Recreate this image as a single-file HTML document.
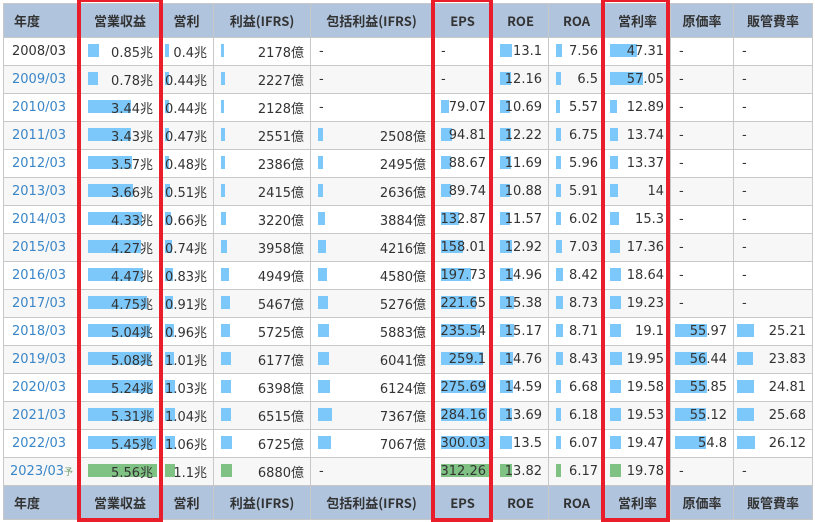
<!DOCTYPE html>
<html><head><meta charset="utf-8"><style>
body{margin:0;background:#fff;width:815px;height:522px;overflow:hidden;position:relative;font-family:"DejaVu Sans","Noto Sans CJK JP",sans-serif;}
table{position:absolute;left:3px;top:3px;border-collapse:collapse;table-layout:fixed;width:809px;font-size:13px;color:#333;}
td,th{border:1px solid #c8c8c8;padding:0 6px 0 0;text-align:right;position:relative;height:27px;white-space:nowrap;overflow:hidden;}
th{background:#b0c4de;height:33px;text-align:center;font-weight:bold;color:#333;font-size:13px;padding:0;font-family:"Noto Sans CJK JP","DejaVu Sans",sans-serif;}
th.y{text-align:left;padding-left:10px;}
td.y{text-align:left;padding-left:8px;color:#3a86c8;}
td.l{text-align:left;padding-left:8px;}
tr:nth-child(odd) td{background:#f7f7f7;}
tr:nth-child(even) td{background:#fff;}
td span{position:relative;z-index:1}
i{position:absolute;top:6px;height:13px;background:#7cc8fb;left:7px;z-index:0}
.g i{background:#80c283}
.c1 i{left:7px}.c2 i{left:5px}.c5 i{left:8px}.c7 i{left:5px}.c8 i{left:4px}.c9 i{left:3px}
sup{font-size:9px;color:#6a9a6a;vertical-align:baseline}
.rb{position:absolute;border:4px solid #ea1d2a;top:-2px;height:516px;z-index:5}
</style></head><body>
<table>
<colgroup><col style="width:77px"><col style="width:79px"><col style="width:54px"><col style="width:97px"><col style="width:122px"><col style="width:60px"><col style="width:56px"><col style="width:56px"><col style="width:66px"><col style="width:63px"><col style="width:79px"></colgroup>
<tr><th class="y">年度</th><th>営業収益</th><th>営利</th><th>利益(IFRS)</th><th>包括利益(IFRS)</th><th>EPS</th><th>ROE</th><th>ROA</th><th>営利率</th><th>原価率</th><th>販管費率</th></tr>
<tr><td class="y" style="color:#333">2008/03</td><td class="c1"><i style="width:11px"></i><span>0.85兆</span></td><td class="c2"><i style="width:4px"></i><span>0.4兆</span></td><td><i style="width:3px"></i><span>2178億</span></td><td class="l">-</td><td class="l">-</td><td><i style="width:12px"></i><span>13.1</span></td><td><i style="width:6px"></i><span>7.56</span></td><td class="c7"><i style="width:27px"></i><span>47.31</span></td><td class="l">-</td><td class="l">-</td></tr>
<tr><td class="y">2009/03</td><td class="c1"><i style="width:10px"></i><span>0.78兆</span></td><td class="c2"><i style="width:4px"></i><span>0.44兆</span></td><td><i style="width:4px"></i><span>2227億</span></td><td class="l">-</td><td class="l">-</td><td><i style="width:11px"></i><span>12.16</span></td><td><i style="width:5px"></i><span>6.5</span></td><td class="c7"><i style="width:33px"></i><span>57.05</span></td><td class="l">-</td><td class="l">-</td></tr>
<tr><td class="y">2010/03</td><td class="c1"><i style="width:43px"></i><span>3.44兆</span></td><td class="c2"><i style="width:4px"></i><span>0.44兆</span></td><td><i style="width:3px"></i><span>2128億</span></td><td class="l">-</td><td class="c5"><i style="width:8px"></i><span>79.07</span></td><td><i style="width:10px"></i><span>10.69</span></td><td><i style="width:4px"></i><span>5.57</span></td><td class="c7"><i style="width:7px"></i><span>12.89</span></td><td class="l">-</td><td class="l">-</td></tr>
<tr><td class="y">2011/03</td><td class="c1"><i style="width:43px"></i><span>3.43兆</span></td><td class="c2"><i style="width:4px"></i><span>0.47兆</span></td><td><i style="width:4px"></i><span>2551億</span></td><td><i style="width:5px"></i><span>2508億</span></td><td class="c5"><i style="width:11px"></i><span>94.81</span></td><td><i style="width:11px"></i><span>12.22</span></td><td><i style="width:5px"></i><span>6.75</span></td><td class="c7"><i style="width:8px"></i><span>13.74</span></td><td class="l">-</td><td class="l">-</td></tr>
<tr><td class="y">2012/03</td><td class="c1"><i style="width:44px"></i><span>3.57兆</span></td><td class="c2"><i style="width:4px"></i><span>0.48兆</span></td><td><i style="width:4px"></i><span>2386億</span></td><td><i style="width:5px"></i><span>2495億</span></td><td class="c5"><i style="width:10px"></i><span>88.67</span></td><td><i style="width:11px"></i><span>11.69</span></td><td><i style="width:5px"></i><span>5.96</span></td><td class="c7"><i style="width:8px"></i><span>13.37</span></td><td class="l">-</td><td class="l">-</td></tr>
<tr><td class="y">2013/03</td><td class="c1"><i style="width:45px"></i><span>3.66兆</span></td><td class="c2"><i style="width:5px"></i><span>0.51兆</span></td><td><i style="width:4px"></i><span>2415億</span></td><td><i style="width:5px"></i><span>2636億</span></td><td class="c5"><i style="width:10px"></i><span>89.74</span></td><td><i style="width:10px"></i><span>10.88</span></td><td><i style="width:5px"></i><span>5.91</span></td><td class="c7"><i style="width:8px"></i><span>14</span></td><td class="l">-</td><td class="l">-</td></tr>
<tr><td class="y">2014/03</td><td class="c1"><i style="width:54px"></i><span>4.33兆</span></td><td class="c2"><i style="width:6px"></i><span>0.66兆</span></td><td><i style="width:5px"></i><span>3220億</span></td><td><i style="width:7px"></i><span>3884億</span></td><td class="c5"><i style="width:18px"></i><span>132.87</span></td><td><i style="width:10px"></i><span>11.57</span></td><td><i style="width:5px"></i><span>6.02</span></td><td class="c7"><i style="width:9px"></i><span>15.3</span></td><td class="l">-</td><td class="l">-</td></tr>
<tr><td class="y">2015/03</td><td class="c1"><i style="width:53px"></i><span>4.27兆</span></td><td class="c2"><i style="width:7px"></i><span>0.74兆</span></td><td><i style="width:6px"></i><span>3958億</span></td><td><i style="width:8px"></i><span>4216億</span></td><td class="c5"><i style="width:22px"></i><span>158.01</span></td><td><i style="width:12px"></i><span>12.92</span></td><td><i style="width:6px"></i><span>7.03</span></td><td class="c7"><i style="width:10px"></i><span>17.36</span></td><td class="l">-</td><td class="l">-</td></tr>
<tr><td class="y">2016/03</td><td class="c1"><i style="width:55px"></i><span>4.47兆</span></td><td class="c2"><i style="width:8px"></i><span>0.83兆</span></td><td><i style="width:8px"></i><span>4949億</span></td><td><i style="width:9px"></i><span>4580億</span></td><td class="c5"><i style="width:30px"></i><span>197.73</span></td><td><i style="width:13px"></i><span>14.96</span></td><td><i style="width:7px"></i><span>8.42</span></td><td class="c7"><i style="width:11px"></i><span>18.64</span></td><td class="l">-</td><td class="l">-</td></tr>
<tr><td class="y">2017/03</td><td class="c1"><i style="width:59px"></i><span>4.75兆</span></td><td class="c2"><i style="width:8px"></i><span>0.91兆</span></td><td><i style="width:9px"></i><span>5467億</span></td><td><i style="width:10px"></i><span>5276億</span></td><td class="c5"><i style="width:35px"></i><span>221.65</span></td><td><i style="width:14px"></i><span>15.38</span></td><td><i style="width:7px"></i><span>8.73</span></td><td class="c7"><i style="width:11px"></i><span>19.23</span></td><td class="l">-</td><td class="l">-</td></tr>
<tr><td class="y">2018/03</td><td class="c1"><i style="width:62px"></i><span>5.04兆</span></td><td class="c2"><i style="width:9px"></i><span>0.96兆</span></td><td><i style="width:9px"></i><span>5725億</span></td><td><i style="width:11px"></i><span>5883億</span></td><td class="c5"><i style="width:39px"></i><span>235.54</span></td><td><i style="width:14px"></i><span>15.17</span></td><td><i style="width:7px"></i><span>8.71</span></td><td class="c7"><i style="width:11px"></i><span>19.1</span></td><td class="c8"><i style="width:32px"></i><span>55.97</span></td><td class="c9"><i style="width:17px"></i><span>25.21</span></td></tr>
<tr><td class="y">2019/03</td><td class="c1"><i style="width:63px"></i><span>5.08兆</span></td><td class="c2"><i style="width:9px"></i><span>1.01兆</span></td><td><i style="width:10px"></i><span>6177億</span></td><td><i style="width:11px"></i><span>6041億</span></td><td class="c5"><i style="width:42px"></i><span>259.1</span></td><td><i style="width:13px"></i><span>14.76</span></td><td><i style="width:7px"></i><span>8.43</span></td><td class="c7"><i style="width:12px"></i><span>19.95</span></td><td class="c8"><i style="width:32px"></i><span>56.44</span></td><td class="c9"><i style="width:16px"></i><span>23.83</span></td></tr>
<tr><td class="y">2020/03</td><td class="c1"><i style="width:65px"></i><span>5.24兆</span></td><td class="c2"><i style="width:10px"></i><span>1.03兆</span></td><td><i style="width:10px"></i><span>6398億</span></td><td><i style="width:12px"></i><span>6124億</span></td><td class="c5"><i style="width:45px"></i><span>275.69</span></td><td><i style="width:13px"></i><span>14.59</span></td><td><i style="width:5px"></i><span>6.68</span></td><td class="c7"><i style="width:11px"></i><span>19.58</span></td><td class="c8"><i style="width:32px"></i><span>55.85</span></td><td class="c9"><i style="width:17px"></i><span>24.81</span></td></tr>
<tr><td class="y">2021/03</td><td class="c1"><i style="width:66px"></i><span>5.31兆</span></td><td class="c2"><i style="width:10px"></i><span>1.04兆</span></td><td><i style="width:10px"></i><span>6515億</span></td><td><i style="width:14px"></i><span>7367億</span></td><td class="c5"><i style="width:46px"></i><span>284.16</span></td><td><i style="width:12px"></i><span>13.69</span></td><td><i style="width:5px"></i><span>6.18</span></td><td class="c7"><i style="width:11px"></i><span>19.53</span></td><td class="c8"><i style="width:31px"></i><span>55.12</span></td><td class="c9"><i style="width:17px"></i><span>25.68</span></td></tr>
<tr><td class="y">2022/03</td><td class="c1"><i style="width:68px"></i><span>5.45兆</span></td><td class="c2"><i style="width:10px"></i><span>1.06兆</span></td><td><i style="width:11px"></i><span>6725億</span></td><td><i style="width:13px"></i><span>7067億</span></td><td class="c5"><i style="width:49px"></i><span>300.03</span></td><td><i style="width:12px"></i><span>13.5</span></td><td><i style="width:5px"></i><span>6.07</span></td><td class="c7"><i style="width:11px"></i><span>19.47</span></td><td class="c8"><i style="width:31px"></i><span>54.8</span></td><td class="c9"><i style="width:18px"></i><span>26.12</span></td></tr>
<tr class="g"><td class="y" style="padding-left:6px">2023/03<sup>予</sup></td><td class="c1"><i style="width:69px"></i><span>5.56兆</span></td><td class="c2"><i style="width:10px"></i><span>1.1兆</span></td><td><i style="width:11px"></i><span>6880億</span></td><td class="l">-</td><td class="c5"><i style="width:50px"></i><span>312.26</span></td><td><i style="width:12px"></i><span>13.82</span></td><td><i style="width:5px"></i><span>6.17</span></td><td class="c7"><i style="width:11px"></i><span>19.78</span></td><td class="l">-</td><td class="l">-</td></tr>
<tr><th class="y">年度</th><th>営業収益</th><th>営利</th><th>利益(IFRS)</th><th>包括利益(IFRS)</th><th>EPS</th><th>ROE</th><th>ROA</th><th>営利率</th><th>原価率</th><th>販管費率</th></tr>
</table>
<div class="rb" style="left:77px;width:78px"></div>
<div class="rb" style="left:431px;width:54px"></div>
<div class="rb" style="left:601px;width:61px"></div>
</body></html>
